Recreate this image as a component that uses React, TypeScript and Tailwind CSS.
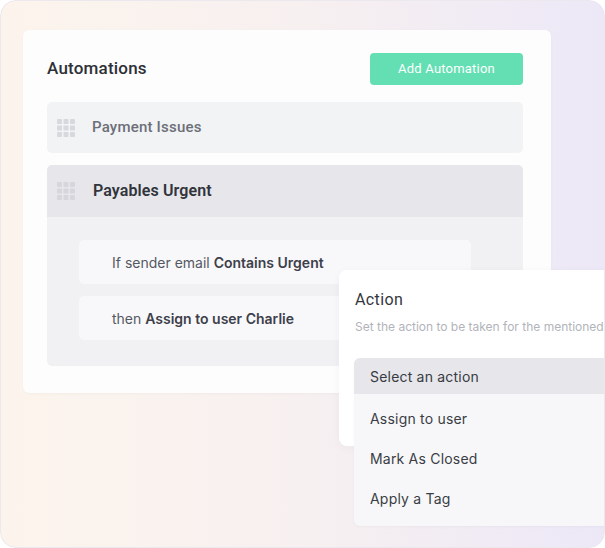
import React from "react";

function Grip({ color }: { color: string }) {
  const cells = [0, 6.5, 13];
  return (
    <svg width="18" height="18" viewBox="0 0 18 18" className="shrink-0">
      {cells.map((y) =>
        cells.map((x) => (
          <rect key={`${x}-${y}`} x={x} y={y} width="5" height="5" rx="0.8" fill={color} />
        ))
      )}
    </svg>
  );
}

const inter = { fontFamily: "Inter, 'Noto Sans', Arial, sans-serif" };

export default function App() {
  return (
    <div
      className="relative w-[605px] h-[548px] overflow-hidden rounded-[16px] border border-[#ebe8ee] bg-linear-to-r from-[#fcf4ec] via-[#f7f0f0] to-[#ece8f7]"
      style={{ fontFamily: "Roboto, 'Noto Sans', Arial, sans-serif" }}
    >
      <div className="pt-[29px] pl-[22px]">
        <div className="w-[528px] h-[363px] rounded-[6px] bg-[#fdfdfd] pl-6 pr-7 pt-[23px] shadow-[0_1px_3px_rgba(0,0,0,0.03)]">
          <div className="flex items-center justify-between h-8">
            <h1 className="text-[17px] font-medium text-[#2d3036] tracking-[0.2px]">Automations</h1>
            <button className="w-[153px] h-8 rounded-[4px] bg-[#63dfb3] text-white text-[13px] tracking-[0.2px]">
              Add Automation
            </button>
          </div>

          <div className="mt-[17px] h-[51px] rounded-[5px] bg-[#f2f3f5] flex items-center pl-[10px]">
            <Grip color="#d8d9de" />
            <span className="ml-[17px] text-[15px] font-medium text-[#6c6f78] tracking-[0.2px]">Payment Issues</span>
          </div>

          <div className="mt-3 rounded-[5px] overflow-hidden">
            <div className="h-[52px] bg-[#e6e6eb] flex items-center pl-[10px]">
              <Grip color="#d6d6dc" />
              <span className="ml-[18px] text-[16px] font-semibold text-[#31343b] tracking-[0.1px]">Payables Urgent</span>
            </div>
            <div className="bg-[#f1f1f4] h-[149px] pl-8 pt-[23px] flex flex-col gap-3" style={inter}>
              <div className="w-[392px] h-11 rounded-[5px] bg-[#f8f8fb] flex items-center pl-[33px] text-[14px] text-[#555862]">
                If sender email&nbsp;<span className="font-semibold text-[#3d4049]">Contains Urgent</span>
              </div>
              <div className="w-[392px] h-11 rounded-[5px] bg-[#f8f8fb] flex items-center pl-[33px] text-[14px] text-[#555862]">
                then&nbsp;<span className="font-semibold text-[#3d4049]">Assign to user Charlie</span>
              </div>
            </div>
          </div>
        </div>
      </div>

      <div className="absolute left-[338px] top-[269px] w-[300px] h-[176px] rounded-[8px] bg-white shadow-[0_2px_10px_rgba(60,50,90,0.04)] pl-4 pt-[20px]">
        <div className="text-[16px] text-[#34373d] tracking-[0.4px] leading-5">Action</div>
        <div className="mt-[8px] text-[12px] text-[#b2b4ba] whitespace-nowrap" style={inter}>
          Set the action to be taken for the mentioned conditions
        </div>
      </div>

      <div
        className="absolute left-[353px] top-[357px] w-[270px] h-[168px] rounded-[6px] bg-[#f7f7fa] overflow-hidden shadow-[0_1px_3px_rgba(0,0,0,0.03)]"
        style={inter}
      >
        <div className="h-9 bg-[#e6e6eb] flex items-center pl-4 text-[14px] text-[#383b42] tracking-[0.2px]">
          Select an action
        </div>
        <div className="pt-1">
          <div className="h-10 flex items-center pl-4 text-[14px] text-[#3a3d44] tracking-[0.2px]">Assign to user</div>
          <div className="h-10 flex items-center pl-4 text-[14px] text-[#3a3d44] tracking-[0.2px]">Mark As Closed</div>
          <div className="h-10 flex items-center pl-4 text-[14px] text-[#3a3d44] tracking-[0.2px]">Apply a Tag</div>
        </div>
      </div>
    </div>
  );
}
